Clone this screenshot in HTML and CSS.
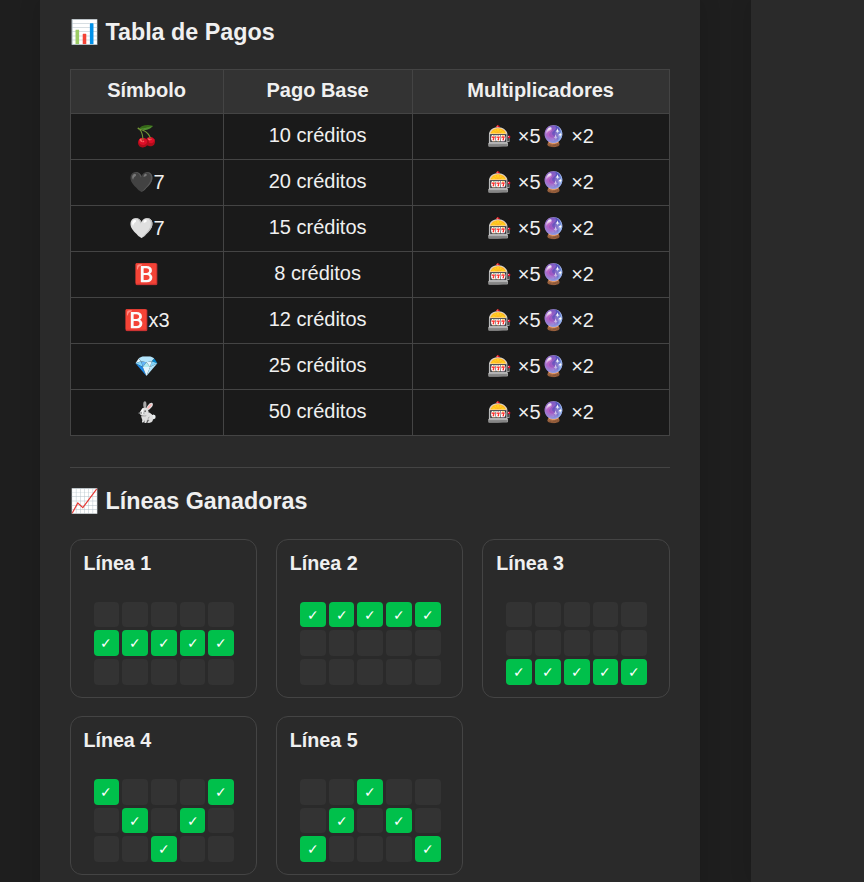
FILE: index.html
```html
<!DOCTYPE html>
<html lang="es">
<head>
<meta charset="utf-8">
<title>Tabla de Pagos</title>
<link rel="stylesheet" href="styles.css">
</head>
<body>
<div class="page">
<main class="panel">
<h2 class="heading">📊 Tabla de Pagos</h2>
<table class="pay">
<thead><tr><th class="c1">Símbolo</th><th class="c2">Pago Base</th><th>Multiplicadores</th></tr></thead>
<tbody>
<tr><td>🍒</td><td class="credit">10 créditos</td><td>🎰 ×5🔮 ×2</td></tr>
<tr><td>🖤7</td><td class="credit">20 créditos</td><td>🎰 ×5🔮 ×2</td></tr>
<tr><td>🤍7</td><td class="credit">15 créditos</td><td>🎰 ×5🔮 ×2</td></tr>
<tr><td>🅱️</td><td class="credit">8 créditos</td><td>🎰 ×5🔮 ×2</td></tr>
<tr><td>🅱️x3</td><td class="credit">12 créditos</td><td>🎰 ×5🔮 ×2</td></tr>
<tr><td>💎</td><td class="credit">25 créditos</td><td>🎰 ×5🔮 ×2</td></tr>
<tr><td>🐇</td><td class="credit">50 créditos</td><td>🎰 ×5🔮 ×2</td></tr>
</tbody>
</table>
<hr class="rule">
<h2 class="heading">📈 Líneas Ganadoras</h2>
<div class="lines">
<section class="card"><h4>Línea 1</h4><div class="grid">
<i></i><i></i><i></i><i></i><i></i>
<b>✓</b><b>✓</b><b>✓</b><b>✓</b><b>✓</b>
<i></i><i></i><i></i><i></i><i></i>
</div></section>
<section class="card"><h4>Línea 2</h4><div class="grid">
<b>✓</b><b>✓</b><b>✓</b><b>✓</b><b>✓</b>
<i></i><i></i><i></i><i></i><i></i>
<i></i><i></i><i></i><i></i><i></i>
</div></section>
<section class="card"><h4>Línea 3</h4><div class="grid">
<i></i><i></i><i></i><i></i><i></i>
<i></i><i></i><i></i><i></i><i></i>
<b>✓</b><b>✓</b><b>✓</b><b>✓</b><b>✓</b>
</div></section>
<section class="card"><h4>Línea 4</h4><div class="grid">
<b>✓</b><i></i><i></i><i></i><b>✓</b>
<i></i><b>✓</b><i></i><b>✓</b><i></i>
<i></i><i></i><b>✓</b><i></i><i></i>
</div></section>
<section class="card"><h4>Línea 5</h4><div class="grid">
<i></i><i></i><b>✓</b><i></i><i></i>
<i></i><b>✓</b><i></i><b>✓</b><i></i>
<b>✓</b><i></i><i></i><i></i><b>✓</b>
</div></section>
</div>
</main>
<div class="side"></div>
</div>
</body>
</html>
```
FILE: styles.css
```css
* { box-sizing: border-box; }
html, body { margin: 0; height: 882px; overflow: hidden; }
body { background: #1e1e1e; color: #f0f0f0; font-family: "Liberation Sans", Arial, sans-serif; }
.page { display: flex; align-items: flex-start; height: 882px; overflow: hidden; }
.panel { width: 660px; margin-left: 39.6px; padding: 18px 30px 0; background: #2a2a2a; box-shadow: 0 0 20px rgba(0,0,0,.15); height: 900px; flex: none; }
.side { flex: none; width: 113px; margin-left: 51.4px; height: 882px; background: #2a2a2a; box-shadow: 0 0 20px rgba(0,0,0,.15); }
.heading { margin: 0; padding-left: .4px; font-size: 23.3px; line-height: 28px; font-weight: 700; color: #f0f0f0; }
.pay { width: 600px; margin-top: 23px; border-collapse: collapse; background: #1a1a1a; table-layout: fixed; font-size: 20px; }
.pay th, .pay td { border: 1px solid #444; text-align: center; }
.pay th { background: #333; font-weight: 700; padding: 9px 12px 11px; }
.pay td { padding: 10px 12px 11px; }
.pay td.credit { padding: 9px 12px 12px; }
.c1 { width: 153px; }
.c2 { width: 189px; }
.rule { border: 0; border-top: 1px solid #444; margin: 31px 0 19px; }
.lines { display: grid; grid-template-columns: repeat(3, 1fr); gap: 18.5px 19.2px; margin-top: 24px; }
.card { border: 1px solid #444; border-radius: 12px; padding: 12.8px 12.8px 12px; background: #2a2a2a; }
.card h4 { margin: 0 0 28.9px; font-size: 19.7px; line-height: 20px; font-weight: 700; }
.grid { display: grid; grid-template-columns: repeat(5, 1fr); gap: 3px; width: 140.6px; margin-left: 10.2px; }
.grid i, .grid b { aspect-ratio: 1; border-radius: 4px; display: flex; align-items: center; justify-content: center; font-style: normal; font-weight: 400; font-size: 14.4px; }
.grid i { background: #333; }
.grid b { background: #00c04b; color: #fff; }
```
